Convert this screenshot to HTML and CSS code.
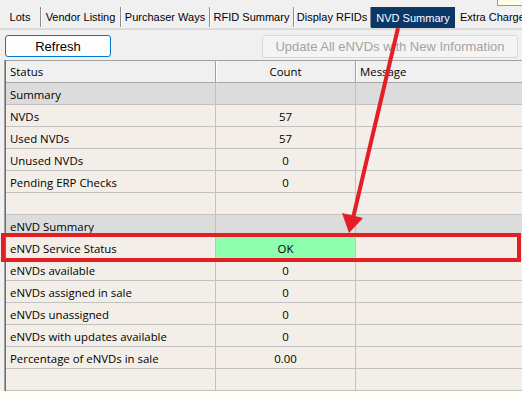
FILE: index.html
```html
<!DOCTYPE html>
<html>
<head>
<meta charset="utf-8">
<link rel="stylesheet" href="styles.css">
</head>
<body>
<div class="app">
  <div class="tabs">
    <div class="tab">Lots</div>
    <div class="tab">Vendor Listing</div>
    <div class="tab">Purchaser Ways</div>
    <div class="tab">RFID Summary</div>
    <div class="tab">Display RFIDs</div>
    <div class="tab active">NVD Summary</div>
    <div class="tab last">Extra Charges</div>
  </div>
  <div class="corner"></div>
  <div class="toolbar">
    <button class="btn">Refresh</button>
    <button class="btn wide" disabled>Update All eNVDs with New Information</button>
  </div>
  <div class="grid">
    <div class="row head"><div class="cell">Status</div><div class="cell num">Count</div><div class="cell">Message</div></div>
    <div class="row group"><div class="cell">Summary</div><div class="cell num"></div><div class="cell"></div></div>
    <div class="row"><div class="cell">NVDs</div><div class="cell num">57</div><div class="cell"></div></div>
    <div class="row"><div class="cell">Used NVDs</div><div class="cell num">57</div><div class="cell"></div></div>
    <div class="row"><div class="cell">Unused NVDs</div><div class="cell num">0</div><div class="cell"></div></div>
    <div class="row"><div class="cell">Pending ERP Checks</div><div class="cell num">0</div><div class="cell"></div></div>
    <div class="row"><div class="cell"></div><div class="cell num"></div><div class="cell"></div></div>
    <div class="row group"><div class="cell">eNVD Summary</div><div class="cell num"></div><div class="cell"></div></div>
    <div class="row"><div class="cell">eNVD Service Status</div><div class="cell num ok">OK</div><div class="cell"></div></div>
    <div class="row"><div class="cell">eNVDs available</div><div class="cell num">0</div><div class="cell"></div></div>
    <div class="row"><div class="cell">eNVDs assigned in sale</div><div class="cell num">0</div><div class="cell"></div></div>
    <div class="row"><div class="cell">eNVDs unassigned</div><div class="cell num">0</div><div class="cell"></div></div>
    <div class="row"><div class="cell">eNVDs with updates available</div><div class="cell num">0</div><div class="cell"></div></div>
    <div class="row"><div class="cell">Percentage of eNVDs in sale</div><div class="cell num">0.00</div><div class="cell"></div></div>
    <div class="row"><div class="cell"></div><div class="cell num"></div><div class="cell"></div></div>
  </div>
  <div class="footer"></div>
  <svg class="annot" width="522" height="397" viewBox="0 0 522 397">
    <rect x="3" y="235" width="516" height="25" fill="none" stroke="#e31e24" stroke-width="4"/>
    <line x1="398" y1="28" x2="353" y2="218" stroke="#e31e24" stroke-width="4"/>
    <polygon points="349,233 342,213 363,218" fill="#e31e24"/>
  </svg>
</div>
</body>
</html>
```
FILE: styles.css
```css
html, body {
  margin: 0;
  padding: 0;
  width: 522px;
  height: 397px;
  overflow: hidden;
  background: #f0f0f0;
}
.app {
  position: relative;
  width: 522px;
  height: 397px;
  display: flex;
  flex-direction: column;
  overflow: hidden;
}
.tabs {
  display: grid;
  grid-template-columns: 41px 80px 89px 84px 77px 84px 67px;
  align-items: end;
  height: 28px;
  border-bottom: 2px solid #dadada;
  font-family: "Liberation Sans", Arial, sans-serif;
  font-size: 11px;
  color: #000;
}
.tab {
  height: 20px;
  display: flex;
  align-items: center;
  justify-content: center;
  white-space: nowrap;
  border-right: 1px solid #8c8c8c;
  box-shadow: 1px 0 0 #ffffff;
  margin-bottom: 1px;
}
.tab.active {
  background: #0a3766;
  color: #fff;
  height: 21px;
  margin-bottom: 0;
  border-right: 0;
  box-shadow: none;
}
.tab.last {
  justify-content: flex-start;
  padding-left: 5px;
  border-right: 0;
  box-shadow: none;
  overflow: hidden;
}
.corner {
  position: absolute;
  right: 0;
  top: 0;
  width: 24px;
  height: 5px;
  background: #fffde6;
  border-left: 1px solid #9a9a9a;
  border-bottom: 1px solid #9a9a9a;
}
.toolbar {
  height: 30px;
  display: flex;
  justify-content: space-between;
  align-items: flex-start;
  padding: 5px 4px 0 5px;
  box-sizing: border-box;
}
.btn {
  width: 106px;
  height: 22px;
  margin: 0;
  padding: 0;
  background: #fdfdfd;
  border: 1px solid #0078d7;
  border-radius: 3px;
  font-family: "Liberation Sans", Arial, sans-serif;
  font-size: 13px;
  color: #000;
}
.btn.wide {
  width: 256px;
  height: 23px;
  background: #f4f4f4;
  border: 1px solid #d9d9d9;
  color: #a3a3a3;
}
.grid {
  margin-left: 4px;
  border-left: 1px solid #a0a0a0;
  box-shadow: inset 1px 0 0 #6e6e6e;
  padding-left: 1px;
  font-family: "Open Sans", "Noto Sans", sans-serif;
  font-size: 11.4px;
  color: #000;
}
.row {
  display: grid;
  grid-template-columns: 210px 140px 200px;
  height: 22px;
  box-sizing: border-box;
  border-bottom: 1px solid #c2c2c2;
  background: #f3efe8;
}
.row.head {
  height: 23px;
  border-top: 1px solid #a0a0a0;
  border-bottom: 1px solid #a8a8a8;
  background: #f0f0f0;
}
.row.group {
  background: #dcdcdc;
}
.cell {
  padding: 2px 0 0 4px;
  line-height: 19px;
  border-right: 1px solid #c2c2c2;
  white-space: nowrap;
  overflow: hidden;
}
.head .cell {
  padding-top: 1px;
  border-right: 1px solid #a0a0a0;
  box-shadow: 1px 0 0 #fff;
}
.cell.num {
  text-align: center;
  padding-left: 0;
}
.cell.ok {
  background: #8effae;
}
.footer {
  flex: 1;
  background: #fffff2;
}
.annot {
  position: absolute;
  left: 0;
  top: 0;
  pointer-events: none;
}
```
